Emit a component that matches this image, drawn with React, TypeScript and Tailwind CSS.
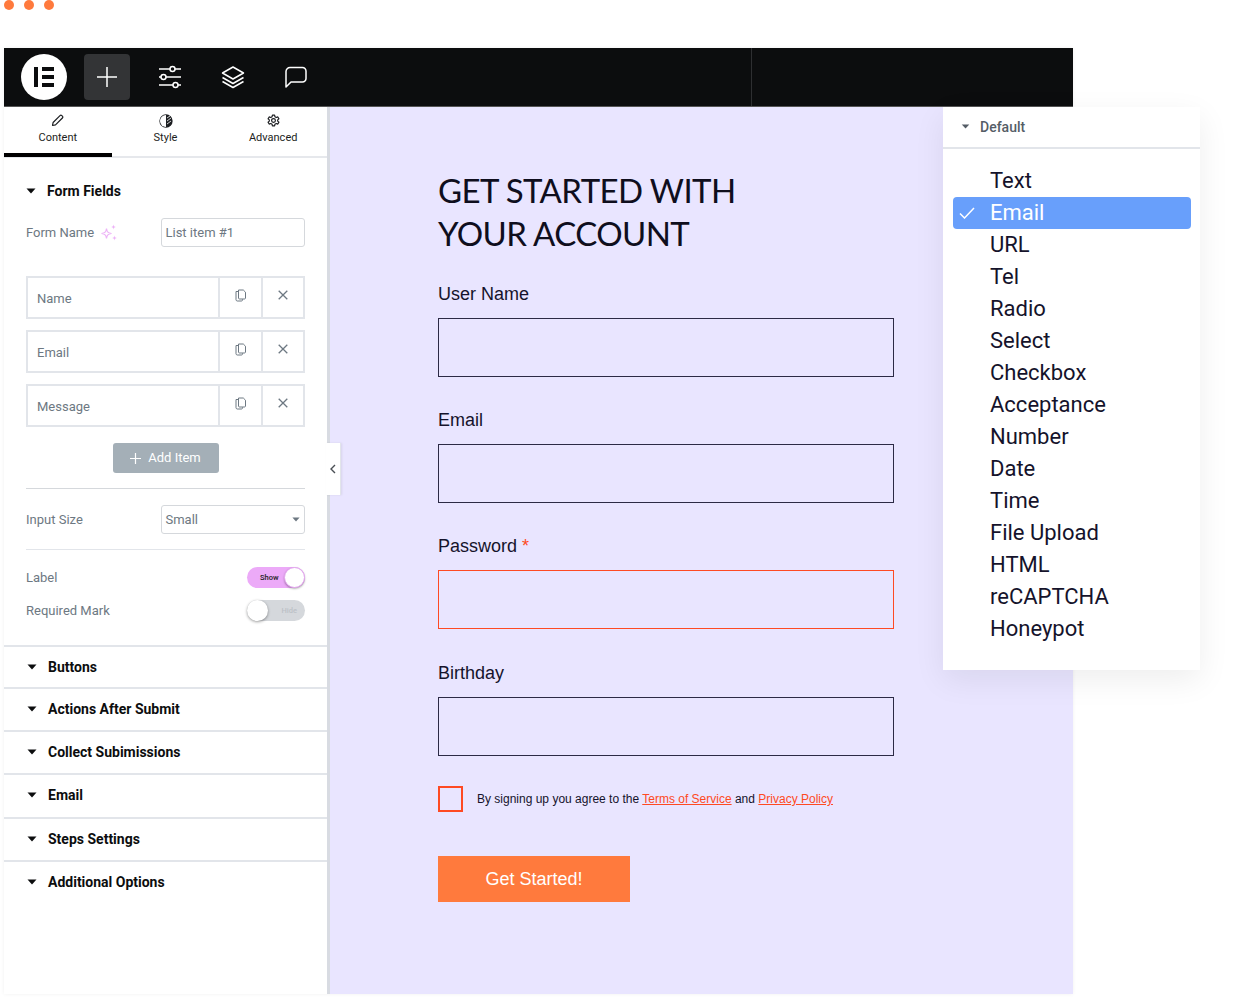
import React from "react";

const roboto = "font-['Roboto',sans-serif]";
const arial = "font-['Liberation_Sans',Arial,sans-serif]";

function Caret({ className = "" }: { className?: string }) {
  return (
    <svg width="10" height="6" viewBox="0 0 10 6" className={className}>
      <path d="M0.5 0.5h9L5 5.5z" fill="currentColor" />
    </svg>
  );
}

function Logo() {
  return (
    <div className="w-[46px] h-[46px] rounded-full bg-white flex items-center justify-center">
      <svg width="20" height="20" viewBox="0 0 20 20">
        <rect x="0" y="0" width="4" height="20" fill="#0c0d0e" />
        <rect x="8" y="0" width="12" height="4" fill="#0c0d0e" />
        <rect x="8" y="8" width="12" height="4" fill="#0c0d0e" />
        <rect x="8" y="16" width="12" height="4" fill="#0c0d0e" />
      </svg>
    </div>
  );
}

function TopIcons() {
  return (
    <>
      <svg width="24" height="24" viewBox="0 0 24 24" fill="none" stroke="#fff" strokeWidth="1.5" className="ml-[28px]">
        <path d="M1 4h11M17 4h6M1 12h2M8 12h15M1 20h14M20 20h3" />
        <circle cx="14.5" cy="4" r="2.5" />
        <circle cx="5.5" cy="12" r="2.5" />
        <circle cx="17.5" cy="20" r="2.5" />
      </svg>
      <svg width="24" height="24" viewBox="0 0 24 24" fill="none" stroke="#fff" strokeWidth="1.5" strokeLinejoin="round" className="ml-[39px]">
        <path d="M12 2L22.5 8 12 14 1.5 8z" />
        <path d="M1.5 12.5L12 18.5 22.5 12.5" />
        <path d="M1.5 16.5L12 22.5 22.5 16.5" />
      </svg>
      <svg width="24" height="24" viewBox="0 0 24 24" fill="none" stroke="#fff" strokeWidth="1.5" strokeLinejoin="round" className="ml-[39px]">
        <path d="M2 22V6.5A4 4 0 0 1 6 2.500h12.500a3.500 3.500 0 0 1 3.500 3.500v7.500a3.500 3.500 0 0 1-3.500 3.500H7z" />
      </svg>
    </>
  );
}

function Tab({ label, children, active }: { label: string; children: React.ReactNode; active?: boolean }) {
  return (
    <div className={`w-[108px] h-[46px] flex flex-col items-center pt-[6px] ${active ? "border-b-4 border-black h-[50px]" : ""}`}>
      <div className="h-[15px] flex items-center justify-center">{children}</div>
      <div className={`${roboto} text-[11px] leading-[14px] mt-[3px] text-[#1c1e21]`}>{label}</div>
    </div>
  );
}

function Sparkle() {
  return (
    <svg width="18" height="18" viewBox="0 0 18 18" className="ml-[6px]" fill="none">
      <path d="M6.500 4.500C7 8 8 9 11.500 9.500 8 10 7 11 6.500 14.500 6 11 5 10 1.500 9.500 5 9 6 8 6.500 4.500z" stroke="#edb3f7" strokeWidth="1.200" />
      <path d="M13.500 0.500c.2 1.800.7 2.300 2.500 2.500-1.800.2-2.300.7-2.500 2.500-.2-1.800-.7-2.300-2.500-2.500 1.800-.2 2.300-.7 2.500-2.500z" fill="#edb3f7" />
      <path d="M14.500 11.500c.2 1.800.7 2.300 2.500 2.500-1.800.2-2.300.7-2.500 2.500-.2-1.800-.7-2.300-2.500-2.500 1.800-.2 2.300-.7 2.500-2.500z" fill="#edb3f7" />
    </svg>
  );
}

function RepeaterRow({ label }: { label: string }) {
  return (
    <div className="h-[43px] flex border-2 border-[#e2e5ea]">
      <div className={`${roboto} flex-1 pl-[9px] pt-[13px] text-[13px] leading-[16px] text-[#6d7882]`}>{label}</div>
      <div className="w-[43px] border-l-2 border-[#e2e5ea] flex justify-center pt-[11px]">
        <svg width="11" height="13" viewBox="0 0 11 13" fill="none" stroke="#6d7882" strokeWidth="1">
          <path d="M3.500 2.500H1v8.200c0 .7.500 1.300 1.200 1.300h4.300c.5 0 1-.4 1-1v-.7" />
          <path d="M3.500 1h4.800L10.500 3.200v5.800c0 .5-.4 1-1 1h-5c-.6 0-1-.5-1-1z" />
        </svg>
      </div>
      <div className="w-[42px] border-l-2 border-[#e2e5ea] flex justify-center pt-[12px]">
        <svg width="10" height="10" viewBox="0 0 10 10" stroke="#6d7882" strokeWidth="1.300">
          <path d="M0.700 0.700l8.600 8.600M9.300 0.700L0.700 9.300" />
        </svg>
      </div>
    </div>
  );
}

function Section({ label, h }: { label: string; h: string }) {
  return (
    <div className={`${h} shrink-0 flex items-start border-t-2 border-[#e2e5ea] pl-[23px] pt-[11px]`}>
      <Caret className="text-[#0c0d0e] mt-[6px]" />
      <span className={`${roboto} ml-[11px] text-[14px] leading-[18px] font-bold text-[#0c0d0e]`}>{label}</span>
    </div>
  );
}

function Field({ label, required, className, error }: { label: string; required?: boolean; className: string; error?: boolean }) {
  return (
    <div className={className}>
      <div className={`${arial} text-[18px] leading-[22px] text-[#15132b]`}>
        {label}
        {required && <span className="text-[#fe4a23] ml-[5px]">*</span>}
      </div>
      <div className={`w-[456px] h-[59px] border mt-[13px] ${error ? "border-[#fe4a23]" : "border-[#2c2a45]"}`} />
    </div>
  );
}

const types = ["Text", "Email", "URL", "Tel", "Radio", "Select", "Checkbox", "Acceptance", "Number", "Date", "Time", "File Upload", "HTML", "reCAPTCHA", "Honeypot"];

export default function App() {
  return (
    <div className="relative w-[1240px] h-[998px] bg-white overflow-hidden pl-1">
      <div className="flex gap-[10px] h-[48px] -mt-0">
        <div className="w-[10px] h-[10px] rounded-full bg-[#ff7a3d]" />
        <div className="w-[10px] h-[10px] rounded-full bg-[#ff7a3d]" />
        <div className="w-[10px] h-[10px] rounded-full bg-[#ff7a3d]" />
      </div>
      <div className="w-[1069px] h-[946px] flex flex-col shadow-[0_0_4px_rgba(0,0,0,0.06)]">
        <div className="h-[59px] shrink-0 bg-[#0c0d0e] border-b border-[#555] flex items-center pl-[17px] relative">
          <Logo />
          <div className="ml-[17px] w-[46px] h-[46px] rounded bg-[#333436] flex items-center justify-center">
            <svg width="20" height="20" viewBox="0 0 20 20" stroke="#fff" strokeWidth="1.500">
              <path d="M10 0v20M0 10h20" />
            </svg>
          </div>
          <TopIcons />
          <div className="absolute left-[747px] top-0 bottom-0 w-px bg-[#2e2f31]" />
        </div>
        <div className="flex flex-1 min-h-0">
          <div className="relative w-[326px] shrink-0 border-r-[3px] border-[#d8dbe2] bg-white flex flex-col">
            <div className="flex h-[51px] shrink-0 border-b-2 border-[#e6e8ec]">
              <Tab label="Content" active>
                <svg width="13" height="13" viewBox="0 0 13 13" fill="none" stroke="#1c1e21" strokeWidth="1.200" strokeLinejoin="round">
                  <path d="M1.500 11.500l.6-3L9 1.600a1.300 1.300 0 0 1 1.800 0l.6.6a1.300 1.300 0 0 1 0 1.800L4.500 10.900z" />
                </svg>
              </Tab>
              <Tab label="Style">
                <svg width="14" height="14" viewBox="0 0 14 14">
                  <circle cx="7" cy="7" r="6" fill="none" stroke="#1c1e21" strokeWidth="1.300" />
                  <path d="M7 1a6 6 0 0 0 0 12z" fill="#fff" />
                  <path d="M7 1a6 6 0 0 1 0 12z" fill="#1c1e21" />
                  <path d="M8 4l3-2M8 7l4-3M8 10l4-3" stroke="#fff" strokeWidth="0.800" />
                </svg>
              </Tab>
              <Tab label="Advanced">
                <svg width="13" height="13" viewBox="0 0 24 24" fill="none" stroke="#1c1e21" strokeWidth="2.200" strokeLinejoin="round">
                  <path d="M10 2h4l.6 3 2.500 1.400 2.900-1 2 3.500-2.300 2v2.200l2.300 2-2 3.500-2.900-1L14.600 19l-.6 3h-4l-.6-3-2.500-1.400-2.900 1-2-3.500 2.300-2v-2.200l-2.300-2 2-3.500 2.900 1L9.400 5z" />
                  <circle cx="12" cy="12" r="3.500" />
                </svg>
              </Tab>
            </div>

            <div className="px-[22px] shrink-0">
              <div className="h-[20px] mt-[23px] flex items-center">
                <Caret className="text-[#0c0d0e]" />
                <span className={`${roboto} ml-[11px] text-[14px] font-bold text-[#0c0d0e]`}>Form Fields</span>
              </div>
              <div className="mt-[17px] h-[29px] flex items-center">
                <div className="w-[135px] flex items-center">
                  <span className={`${roboto} text-[13px] text-[#6d7882]`}>Form Name</span>
                  <Sparkle />
                </div>
                <div className={`${roboto} w-[145px] h-[29px] border border-[#d5d8dc] rounded-[3px] pl-[4px] text-[13px] leading-[28px] text-[#6d7882]`}>
                  List item #1
                </div>
              </div>
              <div className="mt-[29px] flex flex-col gap-[11px]">
                <RepeaterRow label="Name" />
                <RepeaterRow label="Email" />
                <RepeaterRow label="Message" />
              </div>
              <div className="mt-[16px] flex justify-center">
                <div className={`${roboto} w-[106px] h-[30px] bg-[#a4afb7] rounded-[3px] flex items-center justify-center text-white text-[13px]`}>
                  <svg width="11" height="11" viewBox="0 0 11 11" stroke="#fff" strokeWidth="1.200" className="mr-[7px]">
                    <path d="M5.500 0v11M0 5.500h11" />
                  </svg>
                  Add Item
                </div>
              </div>
              <div className="mt-[15px] h-px bg-[#d5d8dc]" />
              <div className="mt-[16px] h-[29px] flex items-center">
                <span className={`${roboto} w-[135px] text-[13px] text-[#6d7882]`}>Input Size</span>
                <div className={`${roboto} w-[145px] h-[29px] border border-[#d5d8dc] rounded-[3px] pl-[4px] pr-[4px] flex items-center justify-between text-[13px] text-[#6d7882]`}>
                  Small
                  <Caret className="text-[#6d7882] w-[8px] h-[5px]" />
                </div>
              </div>
              <div className="mt-[15px] h-px bg-[#e2e5ea]" />
              <div className="mt-[17px] h-[21px] flex items-center justify-between">
                <span className={`${roboto} text-[13px] text-[#6d7882]`}>Label</span>
                <div className="relative w-[58px] h-[21px] rounded-full bg-[#ecaaf8] flex items-center pl-[13px]">
                  <span className={`${roboto} text-[7.500px] font-medium text-[#1c1e21]`}>Show</span>
                  <div className="absolute right-0 top-0 w-[21px] h-[21px] rounded-full bg-white border border-[#e4a6f0] shadow-[0_1px_2px_rgba(0,0,0,0.3)]" />
                </div>
              </div>
              <div className="mt-[12px] h-[21px] flex items-center justify-between">
                <span className={`${roboto} text-[13px] text-[#6d7882]`}>Required Mark</span>
                <div className="relative w-[58px] h-[21px] rounded-full bg-[#d5d8dc] flex items-center justify-end pr-[8px]">
                  <span className={`${roboto} text-[7.500px] font-medium text-[#bcc1c7]`}>Hide</span>
                  <div className="absolute left-0 top-0 w-[21px] h-[21px] rounded-full bg-white shadow-[0_1px_3px_rgba(0,0,0,0.4)]" />
                </div>
              </div>
            </div>

            <div className="mt-[24px] flex flex-col">
              <Section label="Buttons" h="h-[42px]" />
              <Section label="Actions After Submit" h="h-[43px]" />
              <Section label="Collect Subimissions" h="h-[43px]" />
              <Section label="Email" h="h-[44px]" />
              <Section label="Steps Settings" h="h-[43px]" />
              <Section label="Additional Options" h="h-[43px]" />
            </div>

            <div className="absolute left-[322px] top-[336px] w-[15px] h-[52px] bg-white border-r border-[#e2e5ea] flex items-center justify-center shadow-[1px_0_2px_rgba(0,0,0,0.08)]">
              <svg width="6" height="10" viewBox="0 0 6 10" fill="none" stroke="#4a4f55" strokeWidth="1.400">
                <path d="M5 1L1 5l4 4" />
              </svg>
            </div>
          </div>

          <div className="flex-1 bg-[#e9e5ff] pl-[108px]">
            <h1 className="font-['Lato',sans-serif] font-normal text-[33px] leading-[43px] tracking-[-0.6px] text-[#0f0e1d] mt-[62px]">
              GET STARTED WITH
              <br />
              YOUR ACCOUNT
            </h1>
            <Field label="User Name" className="mt-[28px]" />
            <Field label="Email" className="mt-[32px]" />
            <Field label="Password" required error className="mt-[32px]" />
            <Field label="Birthday" className="mt-[33px]" />
            <div className="mt-[30px] flex items-center">
              <div className="w-[25px] h-[26px] border-2 border-[#fe4a23]" />
              <p className={`${arial} ml-[14px] text-[12px] text-[#15132b]`}>
                By signing up you agree to the <span className="text-[#fe4a23] underline">Terms of Service</span> and{" "}
                <span className="text-[#fe4a23] underline">Privacy Policy</span>
              </p>
            </div>
            <div className={`${arial} mt-[44px] w-[192px] h-[46px] bg-[#ff7a3d] flex items-center justify-center text-white text-[18px]`}>
              Get Started!
            </div>
          </div>
        </div>
      </div>

      <div className={`${roboto} absolute left-[943px] top-[107px] w-[257px] h-[563px] bg-white shadow-[0_10px_30px_rgba(0,0,0,0.07)]`}>
        <div className="h-[42px] border-b-2 border-[#e2e5ea] flex items-center pl-[18px]">
          <Caret className="text-[#555d66] w-[9px] h-[5px] -mt-[2px]" />
          <span className="ml-[10px] text-[14px] font-medium text-[#555d66]">Default</span>
        </div>
        <div className="mt-[16px] px-[10px] flex flex-col">
          {types.map((t) =>
            t === "Email" ? (
              <div key={t} className="h-[32px] bg-[#689ffb] rounded-[4px] flex items-center text-white text-[22px] leading-[32px] relative pl-[37px] w-[238px]">
                <svg width="16" height="12" viewBox="0 0 16 12" fill="none" stroke="#fff" strokeWidth="1.500" className="absolute left-[6px] top-[10px]">
                  <path d="M1 6.500L5.500 11 15 1" />
                </svg>
                {t}
              </div>
            ) : (
              <div key={t} className="h-[32px] pl-[37px] text-[22px] leading-[32px] text-[#15132b]">
                {t}
              </div>
            )
          )}
        </div>
      </div>
    </div>
  );
}
